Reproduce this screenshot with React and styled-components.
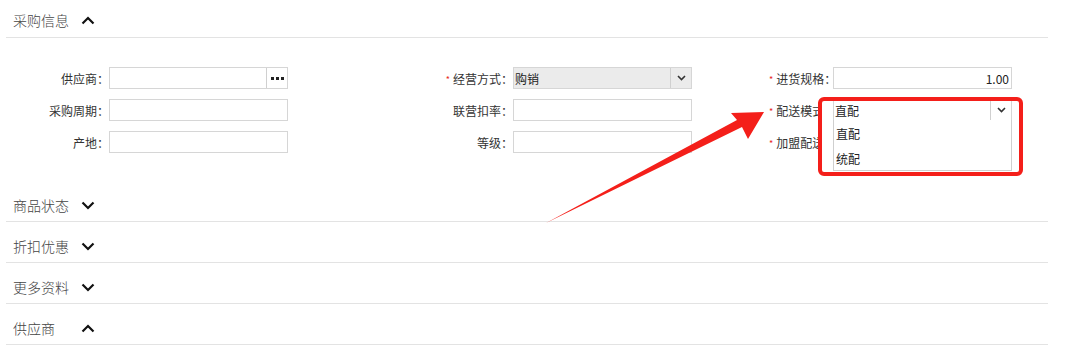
import styled, { createGlobalStyle } from "styled-components";

const GlobalStyle = createGlobalStyle`
	* { box-sizing: border-box; }
	body {
		margin: 0;
		background: #fff;
		font-family: "Noto Sans CJK SC", "Noto Sans", sans-serif;
		color: #333;
	}
`;

const Page = styled.div`
	position: relative;
	padding: 0 34px 0 6px;
`;

const SectionHeader = styled.div`
	display: flex;
	align-items: center;
	height: ${(p) => (p.$first ? "38px" : "41px")};
	padding: ${(p) => (p.$first ? "3px" : "8px")} 0 0 7px;
	border-bottom: 1px solid #e3e3e3;
`;

const Title = styled.span`
	width: 68px;
	font-size: 14px;
	font-weight: 300;
	color: #444;
`;

const Form = styled.div`
	display: grid;
	grid-template-columns: 103px 179px 225px 179px 141px 179px;
	grid-auto-rows: 22px;
	row-gap: 10px;
	padding: 29px 0 28px;
`;

const Label = styled.label`
	display: flex;
	align-items: center;
	justify-content: ${(p) => (p.$left ? "flex-start" : "flex-end")};
	padding-left: ${(p) => (p.$left ? "77px" : "0")};
	margin-right: ${(p) => (p.$clip ? "11px" : "0")};
	font-size: 12px;
	color: #333;
	white-space: nowrap;
	overflow: ${(p) => (p.$clip ? "hidden" : "visible")};
`;

const Star = styled.span`
	color: #e8281e;
	font-size: 9px;
	margin-right: 3px;
	align-self: flex-start;
	margin-top: 6px;
`;

const Control = styled.div`
	position: relative;
	display: flex;
	align-items: center;
	gap: 4px;
`;

const Box = styled.div`
	flex: 0 0 179px;
	display: flex;
	height: 22px;
	border: 1px solid #d6d6d6;
	background: ${(p) => (p.$gray ? "#ebebeb" : "#fff")};
	font-size: 12px;
	color: #222;
`;

const Value = styled.span`
	flex: 1;
	display: flex;
	align-items: center;
	justify-content: ${(p) => (p.$right ? "flex-end" : "flex-start")};
	padding: 0 2px 0 1px;
`;

const SideButton = styled.span`
	flex: 0 0 21px;
	display: flex;
	align-items: center;
	justify-content: center;
	border-left: 1px solid #d0d0d0;
`;

const Menu = styled.ul`
	position: absolute;
	top: 21px;
	left: 0;
	width: 179px;
	margin: 0;
	padding: 0;
	list-style: none;
	background: #fff;
	border: 1px solid #cfcfcf;
	border-top: none;
	z-index: 2;
`;

const MenuItem = styled.li`
	height: 25px;
	display: flex;
	align-items: center;
	padding: 2px 0 0 2px;
	font-size: 12px;
	color: #222;
`;

const Highlight = styled.div`
	position: absolute;
	left: 818px;
	top: 97px;
	width: 205px;
	height: 79px;
	border: 4px solid #f41f1a;
	border-radius: 6px;
	z-index: 3;
`;

const ArrowLayer = styled.svg`
	position: absolute;
	left: 0;
	top: 0;
	pointer-events: none;
	z-index: 3;
`;

const Chevron = ({ up }) => (
	<svg width="14" height="9" viewBox="0 0 14 9">
		<path
			d={up ? "M1.5 7.5 L7 2 L12.5 7.5" : "M1.5 1.5 L7 7 L12.5 1.5"}
			fill="none"
			stroke="#111"
			strokeWidth="2.2"
		/>
	</svg>
);

const SmallChevron = () => (
	<svg width="9" height="6" viewBox="0 0 9 6">
		<path d="M1 1 L4.5 4.5 L8 1" fill="none" stroke="#333" strokeWidth="1.6" />
	</svg>
);

const Dots = () => (
	<svg width="13" height="3" viewBox="0 0 13 3">
		<rect x="0" y="0" width="3" height="3" fill="#222" />
		<rect x="5" y="0" width="3" height="3" fill="#222" />
		<rect x="10" y="0" width="3" height="3" fill="#222" />
	</svg>
);

const Plus = () => (
	<svg width="13" height="13" viewBox="0 0 13 13">
		<path d="M6.5 0.5 V12.5 M0.5 6.5 H12.5" stroke="#4a80e8" strokeWidth="2" />
	</svg>
);

function Section({ title, up, first }) {
	return (
		<SectionHeader $first={first}>
			<Title>{title}</Title>
			<Chevron up={up} />
		</SectionHeader>
	);
}

function App() {
	return (
		<Page>
			<GlobalStyle />
			<Section title="采购信息" up first />
			<Form>
				<Label>供应商：</Label>
				<Control>
					<Box>
						<Value />
						<SideButton>
							<Dots />
						</SideButton>
					</Box>
					<Plus />
				</Control>
				<Label>
					<Star>*</Star>经营方式：
				</Label>
				<Control>
					<Box $gray>
						<Value>购销</Value>
						<SideButton>
							<SmallChevron />
						</SideButton>
					</Box>
				</Control>
				<Label $left>
					<Star>*</Star>进货规格：
				</Label>
				<Control>
					<Box>
						<Value $right>1.00</Value>
					</Box>
				</Control>

				<Label>采购周期：</Label>
				<Control>
					<Box />
				</Control>
				<Label>联营扣率：</Label>
				<Control>
					<Box />
				</Control>
				<Label $left $clip>
					<Star>*</Star>配送模式：
				</Label>
				<Control>
					<Box>
						<Value>直配</Value>
						<SideButton>
							<SmallChevron />
						</SideButton>
					</Box>
					<Menu>
						<MenuItem>直配</MenuItem>
						<MenuItem>统配</MenuItem>
					</Menu>
				</Control>

				<Label>产地：</Label>
				<Control>
					<Box />
				</Control>
				<Label>等级：</Label>
				<Control>
					<Box />
				</Control>
				<Label $left $clip>
					<Star>*</Star>加盟配送方式：
				</Label>
				<Control />
			</Form>
			<Section title="商品状态" />
			<Section title="折扣优惠" />
			<Section title="更多资料" />
			<Section title="供应商" up />

			<Highlight />
			<ArrowLayer width="1082" height="354" viewBox="0 0 1082 354">
				<polygon
					points="546,223 737,120 731,113 764,112 748,139 742,127"
					fill="#f41f1a"
				/>
			</ArrowLayer>
		</Page>
	);
}

export default App;
